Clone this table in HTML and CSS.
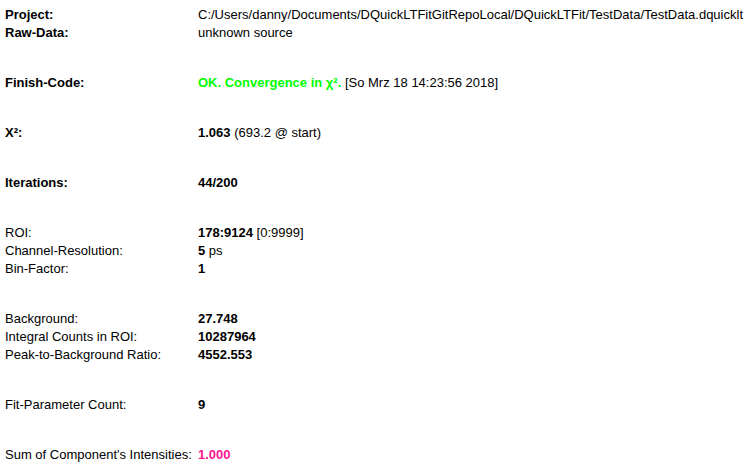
FILE: index.html
```html
<!DOCTYPE html>
<html lang="en">
<head>
    <meta charset="UTF-8">
    <title>Fit Result</title>
    <link rel="stylesheet" href="styles.css">
</head>
<body>
    <table class="result">
        <tr class="hdr"><td>Project:</td><td>C:/Users/danny/Documents/DQuickLTFitGitRepoLocal/DQuickLTFit/TestData/TestData.dquicklt</td></tr>
        <tr class="hdr"><td>Raw-Data:</td><td>unknown source</td></tr>
        <tr class="gap"><td colspan="2"></td></tr>
        <tr class="hdr"><td>Finish-Code:</td><td><b class="ok">OK. Convergence in &chi;&sup2;.</b> [So Mrz 18 14:23:56 2018]</td></tr>
        <tr class="gap"><td colspan="2"></td></tr>
        <tr class="hdr"><td>X&sup2;:</td><td><b>1.063</b> (693.2 @ start)</td></tr>
        <tr class="gap"><td colspan="2"></td></tr>
        <tr class="hdr"><td>Iterations:</td><td><b>44/200</b></td></tr>
        <tr class="gap"><td colspan="2"></td></tr>
        <tr><td>ROI:</td><td><b>178:9124</b> [0:9999]</td></tr>
        <tr><td>Channel-Resolution:</td><td><b>5</b> ps</td></tr>
        <tr><td>Bin-Factor:</td><td><b>1</b></td></tr>
        <tr class="gap"><td colspan="2"></td></tr>
        <tr><td>Background:</td><td><b>27.748</b></td></tr>
        <tr><td>Integral Counts in ROI:</td><td><b>10287964</b></td></tr>
        <tr><td>Peak-to-Background Ratio:</td><td><b>4552.553</b></td></tr>
        <tr class="gap"><td colspan="2"></td></tr>
        <tr><td>Fit-Parameter Count:</td><td><b>9</b></td></tr>
        <tr class="gap"><td colspan="2"></td></tr>
        <tr><td>Sum of Component's Intensities:</td><td><b class="sum">1.000</b></td></tr>
    </table>
</body>
</html>
```

FILE: styles.css
```css
body {
    font-family: "Liberation Sans", Arial, sans-serif;
    font-size: 13px;
    color: #000;
    background-color: #fff;
    margin: 0;
    padding: 6px 0 0 5px;
}
.result {
    border-collapse: collapse;
}
.result td {
    padding: 0;
    height: 18px;
    line-height: 18px;
    white-space: nowrap;
    vertical-align: top;
}
.result td:first-child {
    width: 193px;
}
.hdr td:first-child {
    font-weight: bold;
}
.gap td {
    height: 32px;
}
.ok {
    color: #00ff00;
}
.sum {
    color: #ff1493;
}
```
